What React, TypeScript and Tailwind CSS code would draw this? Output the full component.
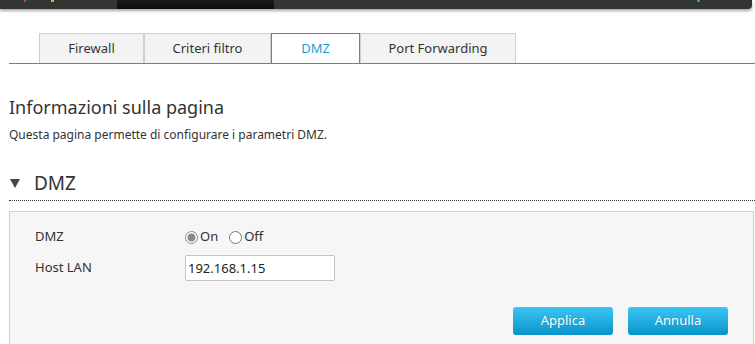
import { useState } from "react";

const tabs = ["Firewall", "Criteri filtro", "DMZ", "Port Forwarding"];
const tabWidths = ["w-[105px]", "w-[127px]", "w-[89px]", "w-[156px]"];

export default function App() {
  const [active, setActive] = useState("DMZ");
  const [dmzOn, setDmzOn] = useState(true);
  const [host, setHost] = useState("192.168.1.15");

  return (
    <div
      className="min-h-screen w-[755px] overflow-hidden bg-white text-[#333]"
      style={{ fontFamily: '"Noto Sans", "Open Sans", sans-serif' }}
    >
      {/* top header strip (cut off) */}
      <div className="relative flex h-[9px] w-[752px] rounded-br-[4px] bg-[#333533] shadow-[0_2px_3px_rgba(0,0,0,0.35)]">
        <div className="w-[117px]" />
        <div className="w-[157px] bg-gradient-to-b from-[#1c1c1c] to-[#0d0d0d]" />
        <span className="absolute left-[24px] top-0 h-[2px] w-[2px] bg-[#d04040]" />
        <span className="absolute left-[51px] top-0 h-[2px] w-[3px] bg-[#e0b020]" />
        <span className="absolute left-[697px] top-0 h-[2px] w-[3px] bg-[#3a8fd8]" />
      </div>

      {/* tabs */}
      <div className="ml-[9px] mt-[24px] flex border-b border-[#1a9fd3] pl-[30px]">
        {tabs.map((t, i) => {
          const on = t === active;
          return (
            <button
              key={t}
              onClick={() => setActive(t)}
              className={
                "flex h-[30px] items-center justify-center border-x border-t text-[13px] " +
                tabWidths[i] +
                (on
                  ? " border-[#1a9fd3] bg-white text-[#1a9fd3]"
                  : " border-[#cfcfcf] bg-[#f3f3f3] text-[#333]")
              }
            >
              {t}
            </button>
          );
        })}
      </div>

      <div className="pl-[9px]">
        <h1 className="mt-[30px] text-[18px] leading-[26px] text-[#333]">Informazioni sulla pagina</h1>
        <p className="mt-[6px] text-[12px] leading-[18px] text-[#333]">
          Questa pagina permette di configurare i parametri DMZ.
        </p>

        <div className="mt-[26px] flex items-center border-b border-dotted border-[#333] pb-[4px]">
          <svg width="10" height="9" viewBox="0 0 10 9" className="ml-[1px]">
            <path d="M0 0 H10 L5 9 Z" fill="#444" />
          </svg>
          <span className="ml-[14px] text-[19px] leading-[26px]">DMZ</span>
        </div>

        <div className="mt-[10px] h-[160px] w-[745px] border border-[#d0d0d0] bg-[#f6f6f6] pl-[25px] pt-[14px] text-[13px]">
          <div className="flex h-[22px] items-center">
            <div className="w-[150px]">DMZ</div>
            <label className="flex items-center">
              <input
                type="radio"
                checked={dmzOn}
                onChange={() => setDmzOn(true)}
                className="m-0 h-[13px] w-[13px] accent-[#8a8a8a]"
              />
              <span className="ml-[2px]">On</span>
            </label>
            <label className="ml-[11px] flex items-center">
              <input
                type="radio"
                checked={!dmzOn}
                onChange={() => setDmzOn(false)}
                className="m-0 h-[13px] w-[13px] accent-[#8a8a8a]"
              />
              <span className="ml-[2px]">Off</span>
            </label>
          </div>
          <div className="mt-[7px] flex items-center">
            <div className="w-[150px]">Host LAN</div>
            <input
              value={host}
              onChange={(e) => setHost(e.target.value)}
              className="h-[26px] w-[150px] rounded-[2px] border border-[#c4c4c4] bg-white px-[2px] text-[13px] text-[#222] outline-none"
            />
          </div>
          <div className="mt-[26px] flex justify-end gap-[15px] pr-[25px]">
            <button className="h-[28px] w-[100px] rounded-[3px] bg-gradient-to-b from-[#38c6f6] to-[#0394c9] text-[13px] text-white [text-shadow:0_0_1px_rgba(0,0,0,0.25)]">
              Applica
            </button>
            <button className="h-[28px] w-[100px] rounded-[3px] bg-gradient-to-b from-[#38c6f6] to-[#0394c9] text-[13px] text-white [text-shadow:0_0_1px_rgba(0,0,0,0.25)]">
              Annulla
            </button>
          </div>
        </div>
      </div>
    </div>
  );
}
